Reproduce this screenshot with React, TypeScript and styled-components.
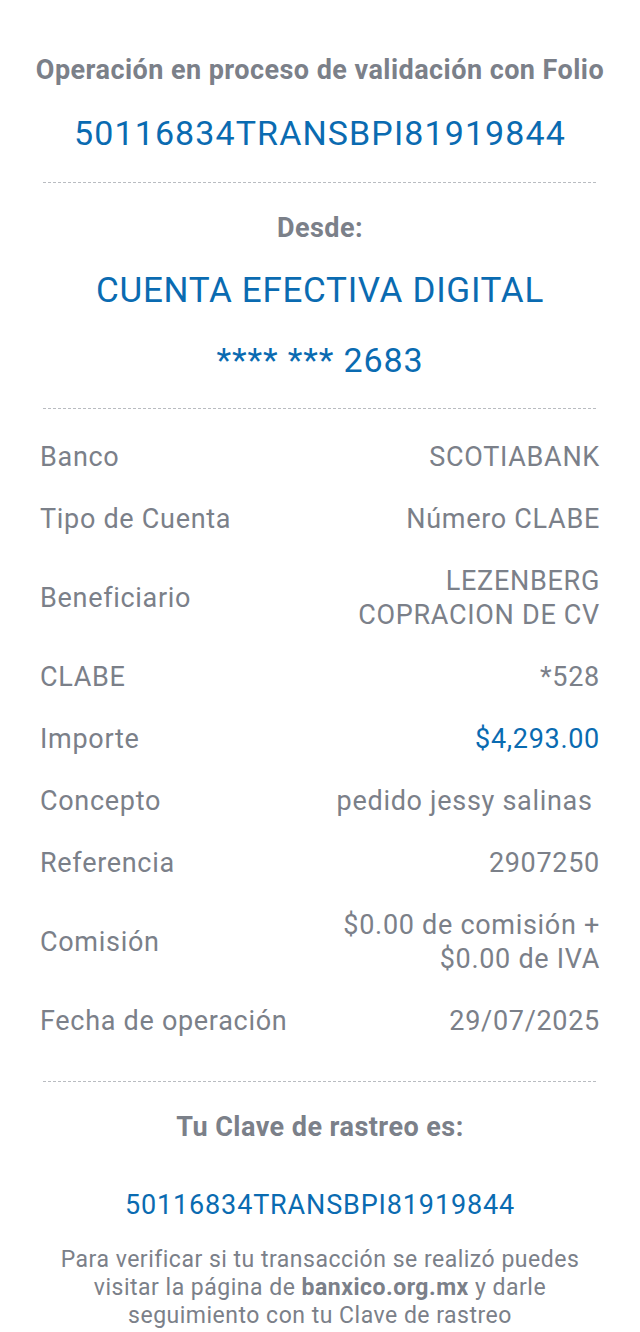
import React from 'react'
import styled, { createGlobalStyle } from 'styled-components'

const GlobalStyle = createGlobalStyle`
    body {
        margin: 0;
        background: #ffffff;
        font-family: Roboto, "Noto Sans", "Liberation Sans", sans-serif;
    }
`

const GRAY = '#7b8089'
const BLUE = '#0a6bb1'

interface Row {
    label: string,
    value: string[],
    highlight?: boolean
}

const rows: Row[] = [
    { label: 'Banco', value: ['SCOTIABANK'] },
    { label: 'Tipo de Cuenta', value: ['Número CLABE'] },
    { label: 'Beneficiario', value: ['LEZENBERG', 'COPRACION DE CV'] },
    { label: 'CLABE', value: ['*528'] },
    { label: 'Importe', value: ['$4,293.00'], highlight: true },
    { label: 'Concepto', value: ['pedido jessy salinas\u00a0'] },
    { label: 'Referencia', value: ['2907250'] },
    { label: 'Comisión', value: ['$0.00 de comisión +', '$0.00 de IVA'] },
    { label: 'Fecha de operación', value: ['29/07/2025'] },
]

const Page = styled.main`
    width: 640px;
    padding: 53px 0 10px;
    box-sizing: border-box;
    display: flex;
    flex-direction: column;
    align-items: center;
    text-align: center;
`

const Heading = styled.h2<{ mt?: number }>`
    margin: ${p => p.mt ?? 0}px 0 0;
    font-size: 27px;
    line-height: 34px;
    font-weight: 700;
    letter-spacing: 0.45px;
    white-space: nowrap;
    color: ${GRAY};
`

const BlueText = styled.div<{ size: number, lh: number, mt: number, ls: number }>`
    margin-top: ${p => p.mt}px;
    font-size: ${p => p.size}px;
    line-height: ${p => p.lh}px;
    letter-spacing: ${p => p.ls}px;
    white-space: nowrap;
    color: ${BLUE};
`

const Dashed = styled.hr<{ mt: number }>`
    width: 554px;
    margin: ${p => p.mt}px 0 0;
    border: none;
    height: 1px;
    background-image: linear-gradient(to right, #b9bcc1 60%, transparent 60%);
    background-size: 5px 1px;
`

const Details = styled.dl`
    width: 560px;
    margin: 17px 0 0;
`

const DetailRow = styled.div`
    display: flex;
    justify-content: space-between;
    align-items: center;
    padding: 14px 0;
    font-size: 27px;
    line-height: 34px;
    letter-spacing: 0.7px;
    color: ${GRAY};
`

const Label = styled.dt`
    text-align: left;
    white-space: nowrap;
`

const Value = styled.dd<{ highlight?: boolean }>`
    margin: 0;
    text-align: right;
    white-space: nowrap;
    color: ${p => p.highlight ? BLUE : GRAY};
`

const Note = styled.p`
    margin: 24px 0 0;
    width: 540px;
    font-size: 23px;
    line-height: 28px;
    letter-spacing: 0.5px;
    color: ${GRAY};

    b {
        font-weight: 700;
    }
`

const App: React.FC = () => {
    return (
        <>
            <GlobalStyle />
            <Page>
                <Heading>Operación en proceso de validación con Folio</Heading>
                <BlueText size={34} lh={40} mt={26} ls={1.1}>50116834TRANSBPI81919844</BlueText>
                <Dashed mt={29} />
                <Heading mt={28}>Desde:</Heading>
                <BlueText size={35} lh={42} mt={25} ls={0.7}>CUENTA EFECTIVA DIGITAL</BlueText>
                <BlueText size={34} lh={42} mt={27} ls={0.85}>**** *** 2683</BlueText>
                <Dashed mt={27} />
                <Details>
                    {rows.map(row => (
                        <DetailRow key={row.label}>
                            <Label>{row.label}</Label>
                            <Value highlight={row.highlight}>
                                {row.value.map(line => <div key={line}>{line}</div>)}
                            </Value>
                        </DetailRow>
                    ))}
                </Details>
                <Dashed mt={29} />
                <Heading mt={28}>Tu Clave de rastreo es:</Heading>
                <BlueText size={27} lh={34} mt={44} ls={0.85}>50116834TRANSBPI81919844</BlueText>
                <Note>
                    Para verificar si tu transacción se realizó puedes visitar la página de <b>banxico.org.mx</b> y darle seguimiento con tu Clave de rastreo
                </Note>
            </Page>
        </>
    )
}

export default App
